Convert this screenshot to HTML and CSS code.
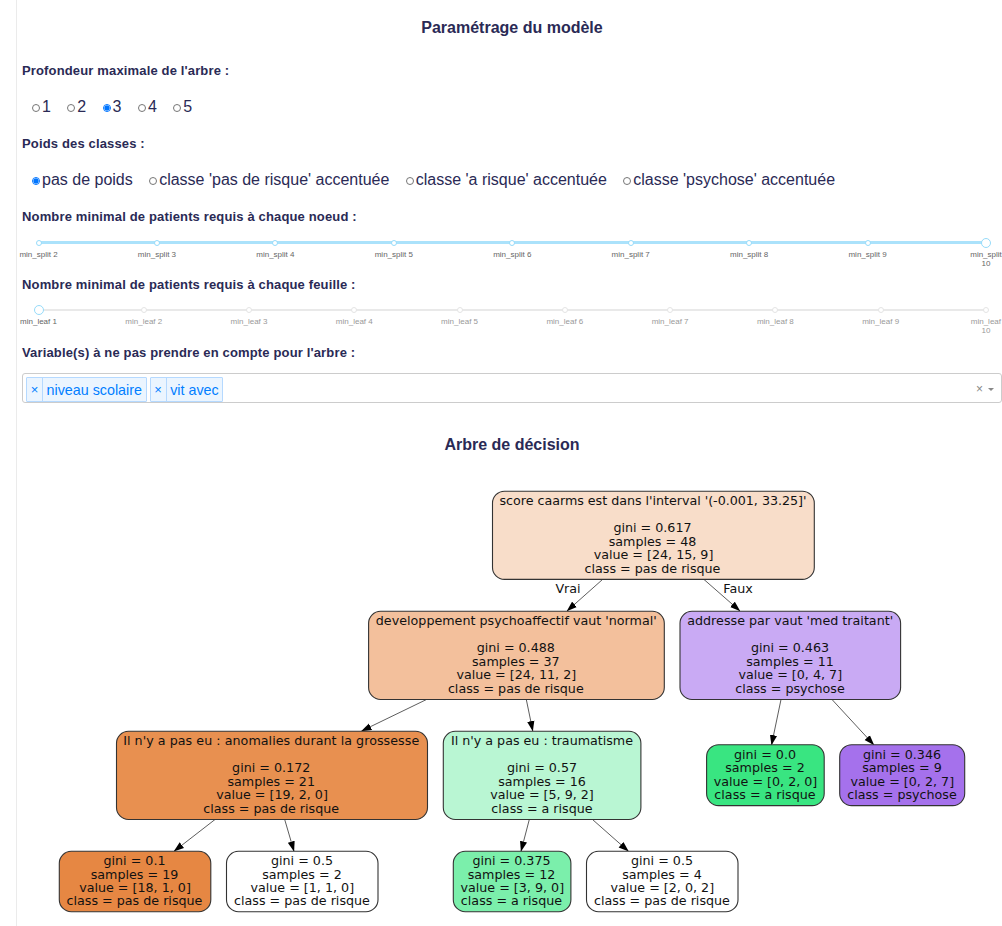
FILE: index.html
```html
<!DOCTYPE html>
<html lang="fr">
<head>
<meta charset="utf-8">
<title>Arbre de décision</title>
<link rel="stylesheet" href="styles.css">
</head>
<body>
<main class="panel">
  <h2 class="title">Paramétrage du modèle</h2>

  <h3 class="label">Profondeur maximale de l'arbre :</h3>
  <div class="radios">
    <label class="radio"><i class="dot"></i>1</label>
    <label class="radio"><i class="dot"></i>2</label>
    <label class="radio"><i class="dot on"></i>3</label>
    <label class="radio"><i class="dot"></i>4</label>
    <label class="radio"><i class="dot"></i>5</label>
  </div>

  <h3 class="label">Poids des classes :</h3>
  <div class="radios">
    <label class="radio"><i class="dot on"></i>pas de poids</label>
    <label class="radio"><i class="dot"></i>classe 'pas de risque' accentuée</label>
    <label class="radio"><i class="dot"></i>classe 'a risque' accentuée</label>
    <label class="radio"><i class="dot"></i>classe 'psychose' accentuée</label>
  </div>

  <h3 class="label">Nombre minimal de patients requis à chaque noeud :</h3>
  <div class="slider active">
    <div class="rail"><i></i><i></i><i></i><i></i><i></i><i></i><i></i><i></i><i class="handle"></i></div>
    <div class="marks"><span>min_split 2</span><span>min_split 3</span><span>min_split 4</span><span>min_split 5</span><span>min_split 6</span><span>min_split 7</span><span>min_split 8</span><span>min_split 9</span><span>min_split<br>10</span></div>
  </div>

  <h3 class="label">Nombre minimal de patients requis à chaque feuille :</h3>
  <div class="slider">
    <div class="rail"><i class="handle"></i><i></i><i></i><i></i><i></i><i></i><i></i><i></i><i></i><i></i></div>
    <div class="marks"><span class="current">min_leaf 1</span><span>min_leaf 2</span><span>min_leaf 3</span><span>min_leaf 4</span><span>min_leaf 5</span><span>min_leaf 6</span><span>min_leaf 7</span><span>min_leaf 8</span><span>min_leaf 9</span><span>min_leaf<br>10</span></div>
  </div>

  <h3 class="label">Variable(s) à ne pas prendre en compte pour l'arbre :</h3>
  <div class="select">
    <span class="tag"><b>×</b><span>niveau scolaire</span></span>
    <span class="tag"><b>×</b><span>vit avec</span></span>
    <span class="clear">×</span>
    <span class="arrow"></span>
  </div>

  <h2 class="title tree-title">Arbre de décision</h2>

  <svg class="tree" viewBox="17 470 985 456" width="985" height="456">
    <defs>
      <marker id="tip" markerWidth="11" markerHeight="8" refX="10" refY="4" orient="auto" markerUnits="userSpaceOnUse"><path d="M0 .4 10.4 4 0 7.6z"/></marker>
    </defs>
    <g class="edges">
      <path d="M602.5 579.5 567 611"/>
      <path d="M704 579.5 740 611"/>
      <path d="M426.5 699.5 361.5 731"/>
      <path d="M526.3 699.5 532.8 731"/>
      <path d="M781 699.5 771.5 745"/>
      <path d="M832 699.5 874 745"/>
      <path d="M215 819.5 174 851.3"/>
      <path d="M284.7 819.5 294 851.3"/>
      <path d="M529.3 819.5 521 851.3"/>
      <path d="M592.5 819.5 628.5 851.3"/>
    </g>
    <g class="nodes">
      <rect x="492.5" y="491.2" width="321.8" height="88.2" rx="12" fill="#f8ddc9"/>
      <rect x="368.6" y="611.3" width="295.7" height="88.2" rx="12" fill="#f3c09c"/>
      <rect x="680" y="611.3" width="220.6" height="88.2" rx="12" fill="#c9aaf4"/>
      <rect x="116.5" y="731.3" width="311" height="88.2" rx="12" fill="#e89050"/>
      <rect x="443.3" y="731.3" width="197.6" height="88.2" rx="12" fill="#b9f6d3"/>
      <rect x="706.6" y="744.7" width="117.6" height="60.9" rx="12" fill="#39e581"/>
      <rect x="839.7" y="744.7" width="125" height="60.9" rx="12" fill="#a571ec"/>
      <rect x="59.3" y="851.3" width="151.5" height="60.4" rx="12" fill="#e68743"/>
      <rect x="226.5" y="851.3" width="151.5" height="60.4" rx="12" fill="#fff"/>
      <rect x="453.3" y="851.3" width="117.6" height="60.4" rx="12" fill="#7befab"/>
      <rect x="586.5" y="851.3" width="151.5" height="60.4" rx="12" fill="#fff"/>
    </g>
    <g class="text">
      <text x="568" y="593">Vrai</text>
      <text x="738" y="593">Faux</text>

      <text x="653" y="505" textLength="307">score caarms est dans l'interval '(-0.001, 33.25]'</text>
      <text x="652.5" y="532.4">gini = 0.617</text>
      <text x="652.5" y="545.8">samples = 48</text>
      <text x="653.5" y="559.1">value = [24, 15, 9]</text>
      <text x="652.5" y="572.5">class = pas de risque</text>

      <text x="516.3" y="625.2" textLength="281">developpement psychoaffectif vaut 'normal'</text>
      <text x="515.8" y="652.4">gini = 0.488</text>
      <text x="515.8" y="665.8">samples = 37</text>
      <text x="516.3" y="679.1">value = [24, 11, 2]</text>
      <text x="515.8" y="692.5">class = pas de risque</text>

      <text x="790.2" y="625.2" textLength="206">addresse par vaut 'med traitant'</text>
      <text x="790" y="652.4">gini = 0.463</text>
      <text x="790" y="665.8">samples = 11</text>
      <text x="790.3" y="679.1">value = [0, 4, 7]</text>
      <text x="790" y="692.5">class = psychose</text>

      <text x="271.2" y="745.2" textLength="296">Il n'y a pas eu : anomalies durant la grossesse</text>
      <text x="271.2" y="772.4">gini = 0.172</text>
      <text x="271.2" y="785.8">samples = 21</text>
      <text x="272" y="799.1">value = [19, 2, 0]</text>
      <text x="271.2" y="812.5">class = pas de risque</text>

      <text x="542" y="745.2" textLength="182">Il n'y a pas eu : traumatisme</text>
      <text x="542" y="772.4">gini = 0.57</text>
      <text x="542" y="785.8">samples = 16</text>
      <text x="542" y="799.1">value = [5, 9, 2]</text>
      <text x="542" y="812.5">class = a risque</text>

      <text x="765" y="758.8">gini = 0.0</text>
      <text x="765" y="772.1">samples = 2</text>
      <text x="765.5" y="785.5">value = [0, 2, 0]</text>
      <text x="765" y="798.8">class = a risque</text>

      <text x="902" y="758.8">gini = 0.346</text>
      <text x="902" y="772.1">samples = 9</text>
      <text x="902.3" y="785.5">value = [0, 2, 7]</text>
      <text x="902" y="798.8">class = psychose</text>

      <text x="134.5" y="865.4">gini = 0.1</text>
      <text x="134.5" y="878.7">samples = 19</text>
      <text x="135" y="892.1">value = [18, 1, 0]</text>
      <text x="134.5" y="905.4">class = pas de risque</text>

      <text x="302" y="865.4">gini = 0.5</text>
      <text x="302" y="878.7">samples = 2</text>
      <text x="302.3" y="892.1">value = [1, 1, 0]</text>
      <text x="302" y="905.4">class = pas de risque</text>

      <text x="511.5" y="865.4">gini = 0.375</text>
      <text x="511.5" y="878.7">samples = 12</text>
      <text x="512.3" y="892.1">value = [3, 9, 0]</text>
      <text x="511.5" y="905.4">class = a risque</text>

      <text x="662" y="865.4">gini = 0.5</text>
      <text x="662" y="878.7">samples = 4</text>
      <text x="662.3" y="892.1">value = [2, 0, 2]</text>
      <text x="662" y="905.4">class = pas de risque</text>
    </g>
  </svg>
</main>
</body>
</html>
```
FILE: styles.css
```css
* { box-sizing: border-box; }
body {
  margin: 0;
  background: #fff;
  color: #2a2a55;
  font-family: "Liberation Sans", Arial, sans-serif;
  overflow: hidden;
}
.panel {
  margin-left: 16px;
  height: 926px;
  border-left: 1px solid #ebebeb;
  padding: 16px 0 0 5px;
}
.title {
  margin: 0 0 32px;
  height: 24px;
  font-size: 16px;
  line-height: 24px;
  text-align: center;
}
.label {
  margin: 0;
  height: 20px;
  padding-top: 1px;
  font-size: 13px;
  line-height: 16px;
  letter-spacing: .15px;
}
.title + .label { margin-top: -10px; }
.radios {
  display: flex;
  gap: 16.4px;
  height: 53px;
  padding: 15px 0 0 10px;
}
.radio {
  display: flex;
  align-items: center;
  gap: 1px;
  height: 20px;
  font-size: 16px;
  line-height: 20px;
  white-space: nowrap;
}
.dot {
  width: 8px;
  height: 8px;
  margin: 2px 1px 0 0;
  border: 1px solid #767676;
  border-radius: 50%;
}
.dot.on {
  border-color: #0075ff;
  background: radial-gradient(circle, #0075ff 2.2px, #fff 3px);
}
.slider { height: 48px; padding: 12px 16px 0 16.5px; }
.slider.active { padding-top: 13px; }
.rail {
  display: flex;
  justify-content: space-between;
  align-items: center;
  height: 4px;
  background: linear-gradient(#e9e9e9, #e9e9e9) center / 100% 2px no-repeat;
}
.active .rail { background: #abe2fb; height: 3px; }
.rail i {
  flex: none;
  width: 6px;
  height: 6px;
  margin: 0 -3px;
  border: 1px solid #e4e4e4;
  border-radius: 50%;
  background: #fff;
}
.active .rail i { border-color: #96dbfa; }
.rail .handle {
  width: 10px;
  height: 10px;
  margin: 0 -5px;
  border-color: #96dbfa;
}
.marks {
  display: flex;
  justify-content: space-between;
  margin-top: 5px;
  color: #999;
  font-size: 8px;
  line-height: 9px;
  text-align: center;
  white-space: nowrap;
}
.active .marks { margin-top: 6px; }
.marks span { display: flex; justify-content: center; width: 0; }
.active .marks, .marks .current { color: #666; }
.select {
  display: flex;
  align-items: center;
  gap: 3px;
  width: 980px;
  height: 30px;
  margin-top: 9px;
  padding: 2px 6px 0 3px;
  border: 1px solid #ccc;
  border-radius: 3px;
}
.tag {
  display: flex;
  height: 25px;
  border: 1px solid #b5d9ff;
  border-radius: 1px;
  background: #ebf5ff;
  color: #007eff;
  font-size: 14.3px;
  line-height: 25px;
}
.tag b {
  width: 16px;
  border-right: 1px solid #b5d9ff;
  font-weight: 400;
  font-size: 13px;
  line-height: 23px;
  text-align: center;
}
.tag span { padding: 0 3.6px; }
.clear { margin-left: auto; color: #888; font-size: 12px; }
.arrow {
  margin: 0 1px 0 2px;
  border: 3px solid transparent;
  border-top-color: #888;
  border-bottom: 0;
}
.tree-title { margin: 30px 0 13px; }
.tree { display: block; margin-left: -5px; }
.edges path { fill: none; stroke: #333; stroke-width: .8; marker-end: url(#tip); }
.edges, .nodes { shape-rendering: geometricPrecision; }
.nodes rect { stroke: #333; stroke-width: 1.1; }
.text {
  fill: #111;
  font-family: "DejaVu Sans", sans-serif;
  font-size: 12.7px;
  text-anchor: middle;
}
```
